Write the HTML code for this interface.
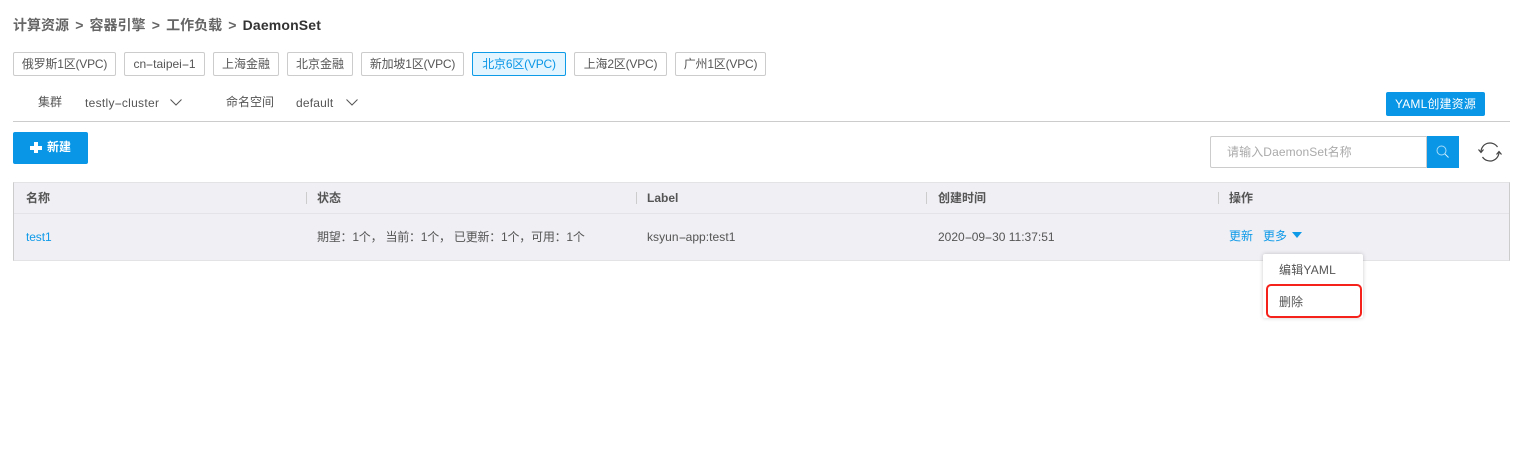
<!DOCTYPE html>
<html><head><meta charset="utf-8"><style>
html,body{margin:0;padding:0;background:#fff}
body{width:1522px;height:469px;position:relative;overflow:hidden;font-family:"Liberation Sans","Noto Sans CJK SC",sans-serif;font-size:12px;color:#555}
.a{position:absolute;white-space:nowrap}
.chip{position:absolute;top:52px;height:24px;box-sizing:border-box;border:1px solid #ccc;border-radius:2px;line-height:23px;text-align:center;color:#555;white-space:nowrap}
.chip.v{letter-spacing:-.2px}
.chip.on{border-color:#0d9be8;background:#e3f5fe;color:#0a96e6}
.t{line-height:16px}
.h{font-weight:bold;color:#555}
.sep{position:absolute;top:192px;width:1px;height:12px;background:#ccc}
.d{display:inline-block;width:7px;text-align:center;transform:scaleX(2)}
</style></head><body>
<div class="a" style="left:13px;top:16px;font-size:14px;line-height:18px;font-weight:bold;color:#666;word-spacing:2.300px">计算资源 &gt; 容器引擎 &gt; 工作负载 &gt; <span style="color:#333;letter-spacing:.15px">DaemonSet</span></div>

<div class="chip v" style="left:13px;width:103px">俄罗斯1区(VPC)</div>
<div class="chip" style="left:124px;width:81px">cn<span class="d">-</span>taipei<span class="d">-</span>1</div>
<div class="chip" style="left:213px;width:66px">上海金融</div>
<div class="chip" style="left:287px;width:66px">北京金融</div>
<div class="chip v" style="left:361px;width:103px">新加坡1区(VPC)</div>
<div class="chip v on" style="left:472px;width:94px">北京6区(VPC)</div>
<div class="chip v" style="left:574px;width:93px">上海2区(VPC)</div>
<div class="chip v" style="left:675px;width:91px">广州1区(VPC)</div>

<div class="a t" style="left:38px;top:94px">集群</div>
<div class="a t" style="left:85px;top:95px;letter-spacing:.3px">testly<span class="d">-</span>cluster</div>
<svg class="a" style="left:169px;top:98px" width="14" height="9" viewBox="0 0 14 9"><path d="M1.500 1.500 7 7l5.500-5.500" fill="none" stroke="#555" stroke-width="1"/></svg>
<div class="a t" style="left:226px;top:94px">命名空间</div>
<div class="a t" style="left:296px;top:95px;letter-spacing:.2px">default</div>
<svg class="a" style="left:345px;top:98px" width="14" height="9" viewBox="0 0 14 9"><path d="M1.500 1.500 7 7l5.500-5.500" fill="none" stroke="#555" stroke-width="1"/></svg>

<div class="a" style="left:1386px;top:92px;width:99px;height:24px;background:#0996e6;border-radius:2px;color:#fff;line-height:24px;text-align:center;letter-spacing:.15px">YAML创建资源</div>
<div class="a" style="left:13px;top:121px;width:1497px;height:1px;background:#ccc"></div>

<div class="a" style="left:13px;top:132px;width:75px;height:32px;background:#0996e6;border-radius:2px;color:#fff;line-height:31px"><span style="position:absolute;left:17px;top:13.500px;width:12px;height:4px;background:#fff"></span><span style="position:absolute;left:21px;top:10px;width:4px;height:11px;background:#fff"></span><span style="position:absolute;left:34px;top:0;font-weight:bold">新建</span></div>

<div class="a" style="left:1210px;top:136px;width:217px;height:32px;box-sizing:border-box;border:1px solid #ccc;border-radius:2px 0 0 2px;line-height:30px;padding-left:16px;color:#aaa;letter-spacing:.1px">请输入DaemonSet名称</div>
<div class="a" style="left:1427px;top:136px;width:32px;height:32px;background:#0996e6"></div>
<svg class="a" style="left:1427px;top:136px" width="32" height="32" viewBox="0 0 32 32"><circle cx="14.500" cy="14.500" r="4.500" fill="none" stroke="#a8dcf8" stroke-width="1"/><path d="M17.800 17.800 21.500 21.500" stroke="#d8f0fd" stroke-width="1"/></svg>
<svg class="a" style="left:1478px;top:140px" width="24" height="24" viewBox="0 0 24 24" fill="none" stroke="#444" stroke-width="1.200"><path d="M3 12A9 9 0 0 1 19.500 7M21 12A9 9 0 0 1 4.500 17"/><path d="M0.500 9.500 3 12.500 5.500 9.500M18.500 14.500 21 11.500 23.500 14.500"/></svg>

<div class="a" style="left:13px;top:182px;width:1497px;height:79px;box-sizing:border-box;background:#efeff4;border:1px solid #e3e3e6;border-left-color:#ccc;border-right-color:#ccc"></div>
<div class="a" style="left:14px;top:213px;width:1495px;height:1px;background:#e3e3e8"></div>
<div class="sep" style="left:306px"></div>
<div class="sep" style="left:636px"></div>
<div class="sep" style="left:926px"></div>
<div class="sep" style="left:1218px"></div>
<div class="a t h" style="left:26px;top:190px">名称</div>
<div class="a t h" style="left:317px;top:190px">状态</div>
<div class="a t h" style="left:647px;top:190px">Label</div>
<div class="a t h" style="left:938px;top:190px">创建时间</div>
<div class="a t h" style="left:1229px;top:190px">操作</div>

<div class="a t" style="left:26px;top:229px;color:#0f9ae8;letter-spacing:-.1px">test1</div>
<div class="a t" style="left:317px;top:229px;letter-spacing:-.22px">期望：1个， 当前：1个， 已更新：1个，可用：1个</div>
<div class="a t" style="left:647px;top:229px;letter-spacing:.05px">ksyun<span class="d">-</span>app:test1</div>
<div class="a t" style="left:938px;top:229px">2020<span class="d">-</span>09<span class="d">-</span>30 11:37:51</div>
<div class="a t" style="left:1229px;top:228px;color:#0f9ae8">更新</div>
<div class="a t" style="left:1263px;top:228px;color:#0f9ae8">更多</div>
<svg class="a" style="left:1291px;top:231px" width="12" height="8" viewBox="0 0 12 8"><path d="M1 1H11L6 7z" fill="#0f9ae8"/></svg>

<div class="a" style="left:1263px;top:254px;width:100px;height:64px;background:#fff;border-radius:2px;box-shadow:0 0 4px rgba(0,0,0,.2)"></div>
<div class="a t" style="left:1279px;top:262px;letter-spacing:.2px">编辑YAML</div>
<div class="a t" style="left:1279px;top:294px">删除</div>
<div class="a" style="left:1266px;top:284px;width:96px;height:34px;box-sizing:border-box;border:2px solid #f5221b;border-radius:5px"></div>
</body></html>
